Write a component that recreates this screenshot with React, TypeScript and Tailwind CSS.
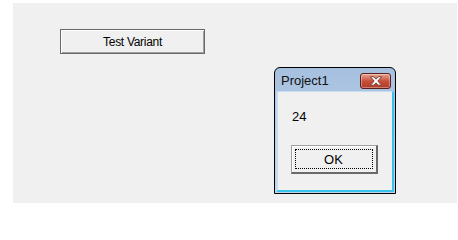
import React from "react";

export default function App() {
  return (
    <div className="w-[458px] h-[220px] bg-white" style={{ fontFamily: '"Liberation Sans", Arial, sans-serif' }}>
      <div className="ml-[13px] pt-[3px]">
        <div className="relative w-[444px] h-[200px] bg-[#f0f0f0] pt-[26px] pl-[47px]">
          <button className="w-[145px] h-[25px] border border-[#696969] bg-[#f0f0f0] shadow-[inset_1px_1px_0_#ffffff,inset_-1px_-1px_0_#a0a0a0] text-[12px] tracking-[-0.3px] text-black flex items-center justify-center leading-none">
            Test Variant
          </button>

          {/* Dialog window */}
          <div className="absolute left-[261px] top-[64px] w-[122px] h-[127px] border border-black rounded-t-[6px] bg-gradient-to-b from-[#a6c0df] to-[#c0d6ee] flex flex-col overflow-hidden">
            <div className="h-[23px] shrink-0 flex items-center justify-between pl-[6px] pr-[4px]">
              <span className="text-[13px] text-[#101010] leading-none mt-[1px]">Project1</span>
              <div className="w-[31px] h-[16px] mt-[2px] rounded-[3px] border border-[#5a1f1f] bg-gradient-to-b from-[#e8a493] via-[#c7503c] to-[#b23a27] flex items-center justify-center shadow-[inset_0_0_0_1px_rgba(255,255,255,0.35)]">
                <svg width="14" height="10" viewBox="0 0 14 10">
                  <path
                    d="M1.5 0.8 L4.8 0.8 L7 3.2 L9.2 0.8 L12.5 0.8 L8.8 5 L12.5 9.2 L9.2 9.2 L7 6.8 L4.8 9.2 L1.5 9.2 L5.2 5 Z"
                    fill="#ffffff"
                    stroke="#6b3a36"
                    strokeWidth="0.9"
                    strokeLinejoin="round"
                  />
                </svg>
              </div>
            </div>
            <div className="flex-1 bg-[#f0f0f0] mx-[1px] mb-[1px] border-l-2 border-l-[#c4daf0] border-r-2 border-r-[#38c2ec] border-b-2 border-b-[#38c2ec] border-t border-t-[#c8dcf0] flex flex-col">
              <div className="pl-[14px] pt-[18px] text-[13px] text-black leading-none">24</div>
              <div className="flex justify-center pt-[22px] pr-[2px]">
                <button className="w-[87px] h-[29px] border-t border-l border-t-[#a0a0a0] border-l-[#a0a0a0] border-b-2 border-r-2 border-b-[#696969] border-r-[#696969] bg-[#f0f0f0] shadow-[inset_1px_1px_0_#ffffff] p-[3px]">
                  <div className="w-full h-full border border-dotted border-black flex items-center justify-center text-[13px] text-black leading-none">
                    OK
                  </div>
                </button>
              </div>
            </div>
          </div>
        </div>
      </div>
    </div>
  );
}
